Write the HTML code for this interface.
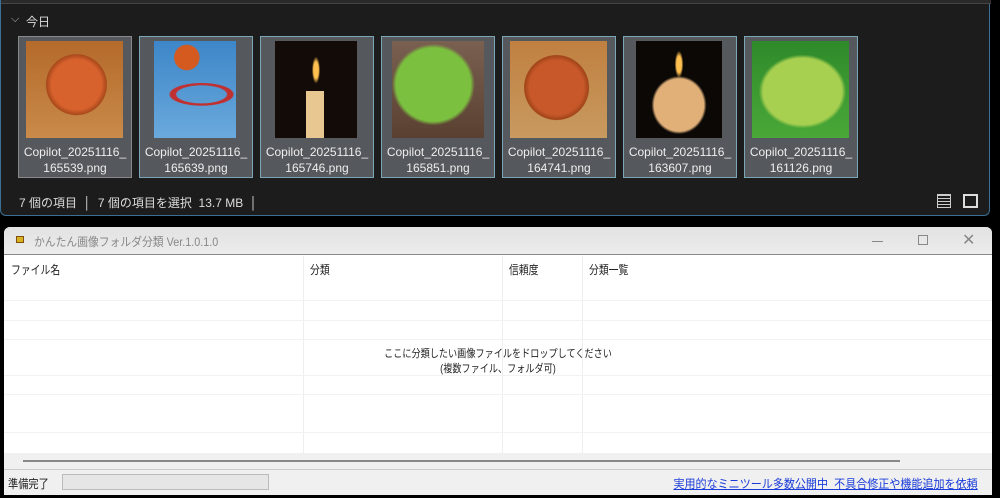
<!DOCTYPE html>
<html><head><meta charset="utf-8"><style>
*{margin:0;padding:0;box-sizing:border-box}
body{width:1000px;height:498px;background:#000;position:relative;overflow:hidden;font-family:"Liberation Sans","Noto Sans CJK JP",sans-serif}
.exp{position:absolute;left:0;top:0;width:990px;height:216px;background:#1c1c1c;border:1px solid #3b6f93;border-top:none;border-radius:0 0 6px 6px}
.topl{position:absolute;left:0;top:0;width:990px;height:4px;background:#2a2a2a;border-bottom:1px solid #444}
.tile{position:absolute;top:36px;width:114px;height:142px;background:#55585d;border:1px solid #7aa6b8}
.th{position:absolute;left:7px;top:4px;width:97px;height:97px}
.nm{position:absolute;left:0;right:0;top:107px;color:#eee;font-size:12px;text-align:center;line-height:16px}
.st{position:absolute;top:194px;color:#ddd;font-size:12px}
.win{position:absolute;left:4px;top:227px;width:988px;height:268px;background:#fff;border-radius:6px 6px 0 0;overflow:hidden}
.tb{height:28px;background:linear-gradient(#e2e2e2,#ececec);position:relative;border-bottom:1px solid #888}
.col{position:absolute;top:29px;bottom:42px;width:1px;background:#eee}
.hl{position:absolute;left:0;right:0;height:1px;background:#f2f2f2}
.h{position:absolute;top:34px;font-size:12px;color:#222;transform:scaleX(.82);transform-origin:left}
</style></head><body>
<div class="exp"><div class="topl"></div>
<div style="position:absolute;left:10px;top:13px;color:#bbb;font-size:11px">⌵</div>
<div style="position:absolute;left:25px;top:13px;color:#ddd;font-size:12px">今日</div>
<div class="tile" style="left:17px;border-color:#888"><div class="th" style="background:radial-gradient(circle at 52% 45%,#d8622e 0 34%,#a8481a 41%,transparent 42%),linear-gradient(#b46a2a,#c98a4a)"></div><div class="nm">Copilot_20251116_<br>165539.png</div></div>
<div class="tile" style="left:138px"><div class="th" style="left:14px;width:82px;background:radial-gradient(circle at 40% 17%,#d45a20 0 13%,transparent 14%),radial-gradient(ellipse 40% 12% at 58% 55%,transparent 0 75%,#c03030 80% 95%,transparent 100%),linear-gradient(#3d86c8,#6aa9dc)"></div><div class="nm">Copilot_20251116_<br>165639.png</div></div>
<div class="tile" style="left:259px"><div class="th" style="left:14px;width:82px;background:linear-gradient(90deg,transparent 38%,#e8c890 38% 60%,transparent 60%) 0 50px/100% 47px no-repeat,radial-gradient(ellipse 5% 14% at 50% 30%,#ffc050 0 60%,transparent 100%),#120b08"></div><div class="nm">Copilot_20251116_<br>165746.png</div></div>
<div class="tile" style="left:380px"><div class="th" style="left:10px;width:92px;background:radial-gradient(ellipse 45% 42% at 45% 45%,#7cc040 0 90%,transparent 100%),linear-gradient(#7a6050,#5a4030)"></div><div class="nm">Copilot_20251116_<br>165851.png</div></div>
<div class="tile" style="left:501px"><div class="th" style="background:radial-gradient(circle at 48% 48%,#c8582a 0 38%,#a04418 45%,transparent 46%),linear-gradient(#c08040,#c89a60)"></div><div class="nm">Copilot_20251116_<br>164741.png</div></div>
<div class="tile" style="left:622px"><div class="th" style="left:12px;width:86px;background:radial-gradient(ellipse 32% 30% at 50% 66%,#e0b078 0 90%,transparent 100%),radial-gradient(ellipse 5% 14% at 50% 24%,#ffc050 0 60%,transparent 100%),#0c0806"></div><div class="nm">Copilot_20251116_<br>163607.png</div></div>
<div class="tile" style="left:743px"><div class="th" style="background:radial-gradient(ellipse 45% 38% at 52% 52%,#a8d050 0 90%,transparent 100%),linear-gradient(#2e8a2a,#4aa838)"></div><div class="nm">Copilot_20251116_<br>161126.png</div></div>
<div class="st" style="left:18px">7 個の項目 &nbsp;│ &nbsp;7 個の項目を選択 &nbsp;13.7 MB &nbsp;│</div>
<div style="position:absolute;left:936px;top:194px;width:14px;height:14px;border:1px solid #ccc;background:repeating-linear-gradient(#ccc 0 1px,transparent 1px 3px)"></div>
<div style="position:absolute;left:962px;top:194px;width:15px;height:14px;border:2px solid #ddd"></div>
</div>
<div class="win">
<div class="tb"><div style="position:absolute;left:12px;top:9px;width:8px;height:7px;background:#d8b020;border:1px solid #805010"></div>
<div style="position:absolute;left:30px;top:6px;font-size:12px;color:#888;transform:scaleX(.9);transform-origin:left">かんたん画像フォルダ分類 Ver.1.0.1.0</div>
<div style="position:absolute;left:868px;top:14px;width:11px;height:1px;background:#888"></div>
<div style="position:absolute;left:914px;top:8px;width:10px;height:10px;border:1px solid #888"></div>
<div style="position:absolute;left:958px;top:3px;font-size:16px;color:#888">✕</div></div>
<div class="h" style="left:7px">ファイル名</div><div class="h" style="left:306px">分類</div><div class="h" style="left:505px">信頼度</div><div class="h" style="left:585px">分類一覧</div>
<div class="col" style="left:299px"></div><div class="col" style="left:498px"></div><div class="col" style="left:578px"></div>
<div class="hl" style="top:73px"></div><div class="hl" style="top:93px"></div><div class="hl" style="top:112px"></div><div class="hl" style="top:148px"></div><div class="hl" style="top:167px"></div><div class="hl" style="top:205px"></div>
<div style="position:absolute;left:0;right:0;top:120px;text-align:center;font-size:11px;color:#222;line-height:15px;transform:scaleX(.83)">ここに分類したい画像ファイルをドロップしてください<br>(複数ファイル、フォルダ可)</div>
<div style="position:absolute;left:0;right:0;top:226px;height:16px;background:#f0f0f0"></div>
<div style="position:absolute;left:19px;top:233px;width:877px;height:2px;background:#888"></div>
<div style="position:absolute;left:0;right:0;top:242px;height:26px;background:#f0f0f0;border-top:1px solid #ccc"></div>
<div style="position:absolute;left:4px;top:248px;font-size:12px;color:#222;transform:scaleX(.85);transform-origin:left">準備完了</div>
<div style="position:absolute;left:58px;top:247px;width:207px;height:16px;border:1px solid #bbb;background:#e6e6e6"></div>
<div style="position:absolute;right:14px;top:248px;font-size:12px;color:#1a3bd8;text-decoration:underline;transform:scaleX(.92);transform-origin:right;white-space:nowrap">実用的なミニツール多数公開中 &nbsp;不具合修正や機能追加を依頼</div>
</div>
</body></html>
